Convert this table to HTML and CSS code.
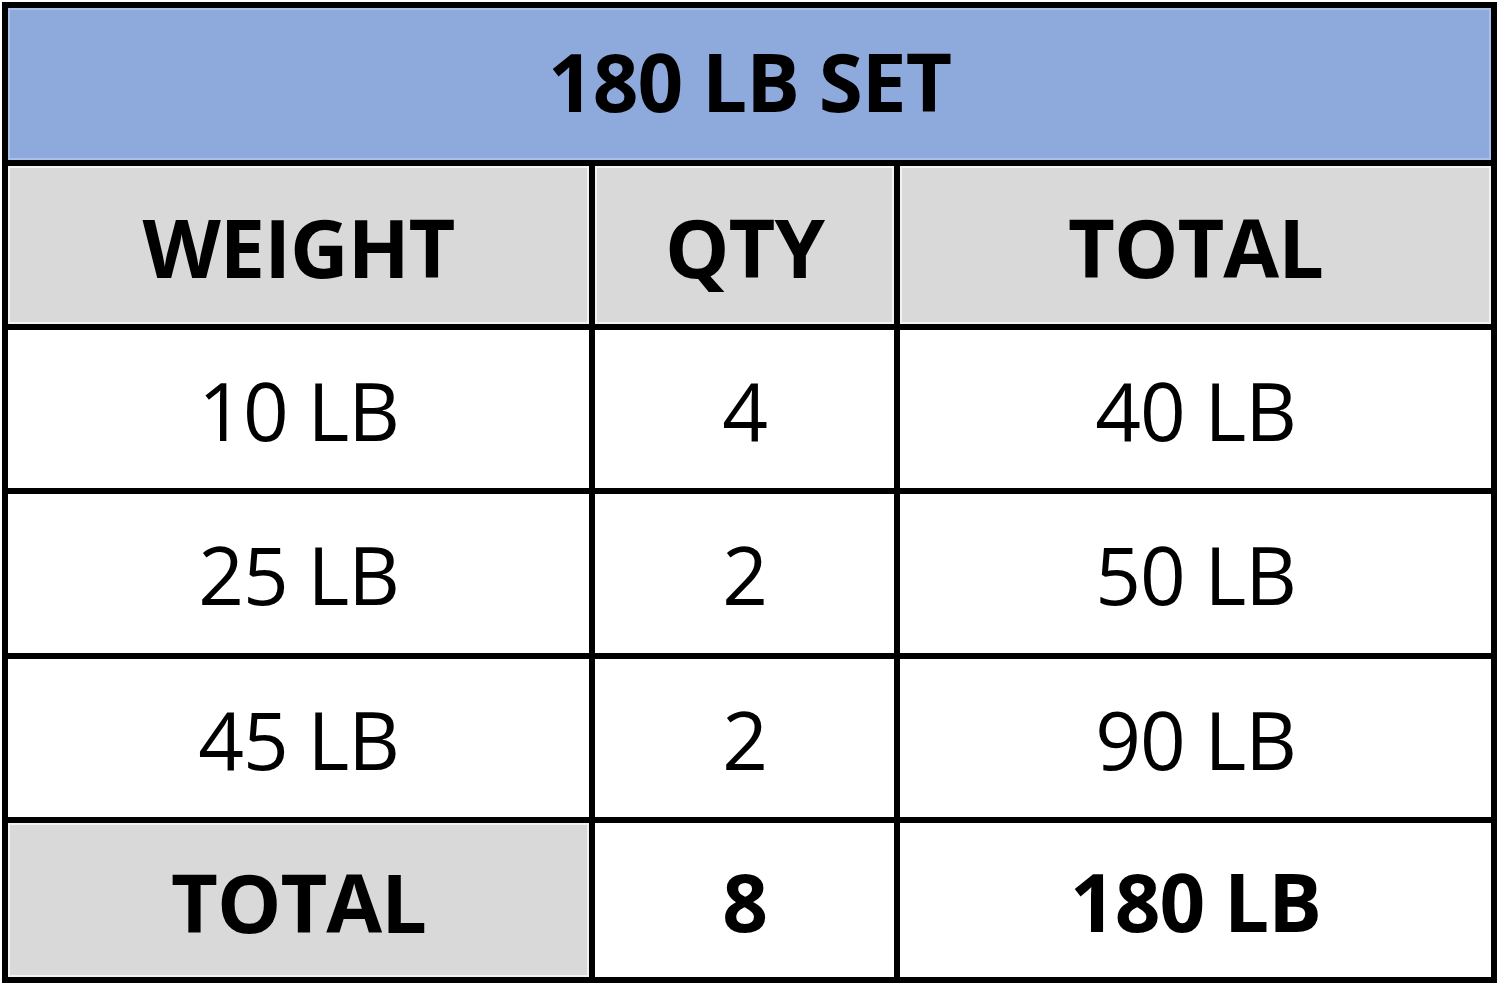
FILE: index.html
```html
<!DOCTYPE html>
<html>
<head>
<meta charset="utf-8">
<link rel="stylesheet" href="styles.css">
</head>
<body>
<div class="sheet">
  <div class="cell title bold">180 LB SET</div>
  <div class="cell head bold">WEIGHT</div>
  <div class="cell head bold">QTY</div>
  <div class="cell head bold">TOTAL</div>
  <div class="cell">10 LB</div>
  <div class="cell">4</div>
  <div class="cell">40 LB</div>
  <div class="cell">25 LB</div>
  <div class="cell">2</div>
  <div class="cell">50 LB</div>
  <div class="cell">45 LB</div>
  <div class="cell">2</div>
  <div class="cell">90 LB</div>
  <div class="cell head bold">TOTAL</div>
  <div class="cell bold">8</div>
  <div class="cell bold">180 LB</div>
</div>
</body>
</html>
```

FILE: styles.css
```css
html, body {
  margin: 0;
  padding: 0;
  background: #ffffff;
}
body {
  width: 1500px;
  height: 986px;
  overflow: hidden;
}
.sheet {
  margin: 2px 0 0 2px;
  width: 1495px;
  height: 981px;
  box-sizing: border-box;
  background: #000000;
  padding: 6px;
  display: grid;
  grid-template-columns: 581px 299px 591px;
  grid-template-rows: 152px 158px 158px 159px 158px 154px;
  gap: 6px;
}
.cell {
  background: #ffffff;
  display: flex;
  align-items: center;
  justify-content: center;
  font-family: "Open Sans", "Liberation Sans", sans-serif;
  font-size: 80px;
  color: #000000;
  letter-spacing: -1px;
}
.bold {
  font-weight: 700;
}
.title {
  grid-column: 1 / 4;
  background: #8eaadc;
  box-shadow: inset 0 0 0 2px #a8c0ea;
  padding-bottom: 8px;
}
.head {
  background: #d9d9d9;
  box-shadow: inset 0 0 0 2px #f2f2f2;
  font-size: 81px;
  padding-top: 2px;
}
```
